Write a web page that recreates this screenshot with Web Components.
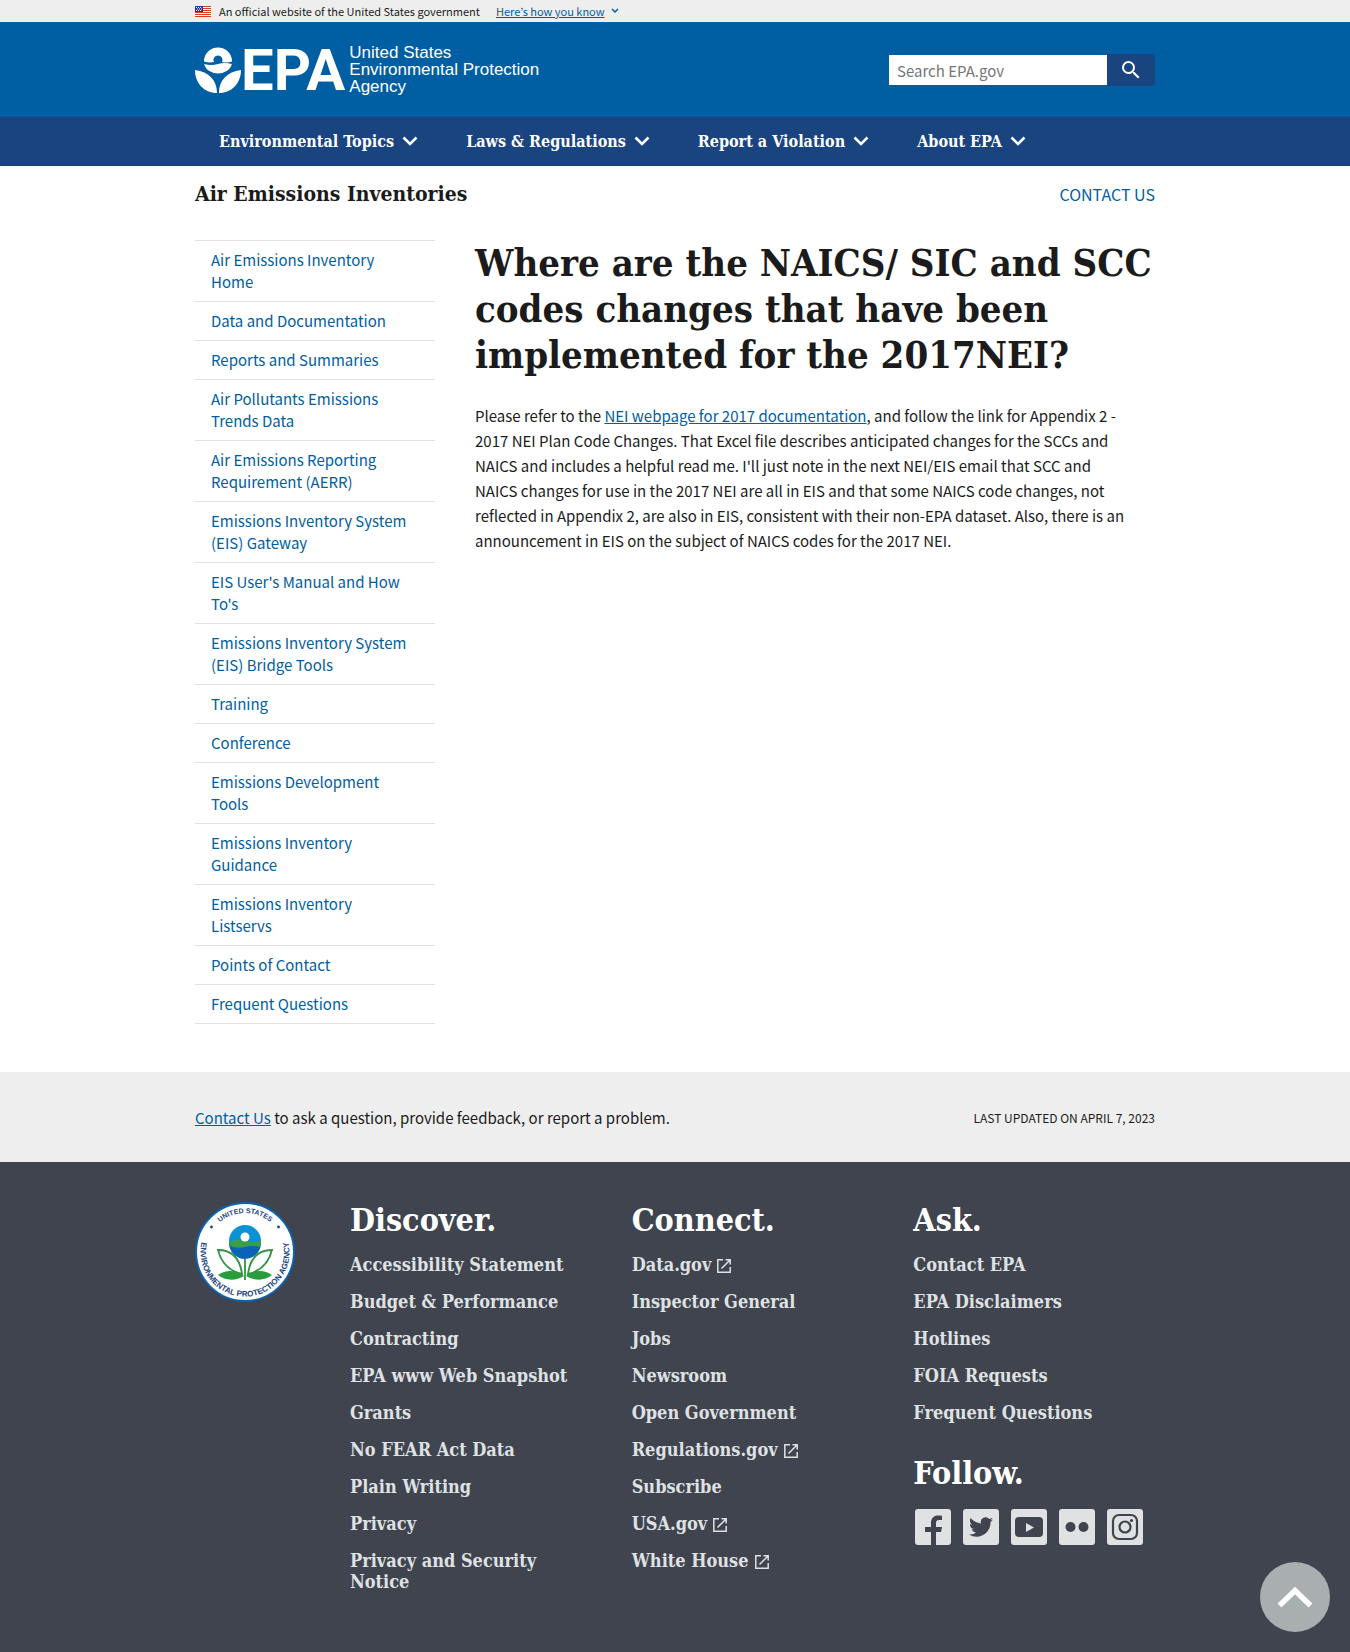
<!DOCTYPE html>
<html lang="en">
<head>
<meta charset="utf-8">
<title>Where are the NAICS/ SIC and SCC codes changes | US EPA</title>
<style>
  :root {
    --sans: "Noto Sans CJK KR", "Noto Sans", sans-serif;
    --serif: "DejaVu Serif Condensed", "DejaVu Serif", serif;
    --primary: #005ea2;
    --primary-dark: #1a4480;
    --ink: #1b1b1b;
    --line: #dfe1e2;
    --footer: #3f444f;
  }
  body { margin: 0; font: 15px/25px var(--sans); color: var(--ink); background: #fff; }
</style>
</head>
<body>
<epa-page></epa-page>
<script>
const base = `
  *, *::before, *::after { box-sizing: border-box; }
  :host { display: block; }
  a { color: var(--primary); }
  ul { list-style: none; margin: 0; padding: 0; }
  h1, h2, p { margin: 0; }
  h1, h2 { font-family: var(--serif); font-weight: 700; }
  svg { display: block; flex: none; }
  button { font: inherit; border: 0; padding: 0; margin: 0; cursor: pointer; background: none; }
  .wrap { max-width: 1024px; margin: 0 auto; padding: 0 32px; }
`;
function define(name, css, html) {
  customElements.define(name, class extends HTMLElement {
    constructor() {
      super();
      this.attachShadow({ mode: 'open' }).innerHTML = `<style>${base}${css}</style>${html}`;
    }
  });
}

define('gov-banner', `
  :host { background: #eee; font-size: 11px; line-height: 22px; }
  .wrap { display: flex; align-items: center; }
  .flag { margin-right: 8px; }
  button { display: flex; align-items: center; gap: 6px; margin-left: 16px; color: var(--primary); }
  button span { text-decoration: underline; }
`, `
  <div class="wrap">
    <svg class="flag" width="16" height="11" viewBox="0 0 16 11" aria-hidden="true">
      <path fill="#fff" d="M0 0h16v11H0z"/>
      <path fill="#db3e1f" d="M0 0h16v1H0zM0 2h16v1H0zM0 4h16v1H0zM0 6h16v1H0zM0 8h16v1H0zM0 10h16v1H0z"/>
      <path fill="#1e33b1" d="M0 0h8v6H0z"/>
      <path fill="#fff" d="M1 1h1v1H1zM3 1h1v1H3zM5 1h1v1H5zM2 2.500h1v1H2zM4 2.500h1v1H4zM6 2.500h1v1H6zM1 4h1v1H1zM3 4h1v1H3zM5 4h1v1H5z"/>
    </svg>
    <span>An official website of the United States government</span>
    <button type="button"><span>Here’s how you know</span>
      <svg width="8" height="6" viewBox="0 0 8 6" aria-hidden="true"><path d="M1 1l3 3 3-3" fill="none" stroke="#005ea2" stroke-width="1.500"/></svg>
    </button>
  </div>
`);

define('epa-logo', `
  a { display: flex; align-items: center; gap: 4px; color: #fff; text-decoration: none; }
  .mark { display: flex; align-items: center; }
  b { font: 700 58px/48px Roboto, sans-serif; }
  .name { font: 17px/17px "Liberation Sans", sans-serif; }
`, `
  <a href="#" aria-label="EPA home">
    <span class="mark">
      <svg width="46" height="46" viewBox="0 0 46 46" aria-hidden="true">
        <path fill="#fff" d="M9 14.500a14 14 0 0 1 28 0q-5 1.800-10 .5a4.500 4.500 0 1 0-8 0q-5 1-10-.5z"/>
        <path fill="#fff" d="M9.200 17q7 2 13.800 0t13.800 0a14 11.500 0 0 1-27.600 0z"/>
        <path fill="#fff" d="M0 23c14 2 22 10 22 23C9 46 0 36 0 23zM46 23c-14 2-22 10-22 23 13 0 22-10 22-23z"/>
      </svg>
      <b>EPA</b>
    </span>
    <span class="name">United States<br>Environmental Protection<br>Agency</span>
  </a>
`);

define('site-search', `
  form { display: flex; align-items: center; }
  input { width: 218px; height: 30px; border: 0; border-radius: 0; background: #fff; padding: 0 8px; font: 15px/24px var(--sans); color: var(--ink); margin: 0; }
  input::placeholder { color: #757575; opacity: 1; }
  button { width: 48px; height: 32px; background: var(--primary-dark); border-radius: 0 4px 4px 0; display: flex; align-items: center; justify-content: center; }
`, `
  <form role="search">
    <input type="search" aria-label="Search" placeholder="Search EPA.gov">
    <button type="button" aria-label="Search">
      <svg width="24" height="24" viewBox="0 0 24 24" fill="#fff" aria-hidden="true"><path d="M15.500 14h-.79l-.28-.27A6.470 6.470 0 0 0 16 9.500 6.500 6.500 0 1 0 9.500 16c1.610 0 3.090-.59 4.230-1.570l.27.28v.79l5 4.990L20.490 19l-4.990-5zm-6 0C7.010 14 5 11.990 5 9.500S7.010 5 9.500 5 14 7.010 14 9.500 11.990 14 9.500 14z"/></svg>
    </button>
  </form>
`);

define('nav-item', `
  button { display: flex; align-items: center; gap: 8px; height: 49px; padding: 0 24px; color: #fff; font: 700 16px/20px var(--serif); white-space: nowrap; }
`, `
  <button type="button"><slot></slot>
    <svg width="16" height="11" viewBox="0 0 16 11" aria-hidden="true"><path d="M1.500 1.500L8 8l6.500-6.500" fill="none" stroke="#fff" stroke-width="2.600"/></svg>
  </button>
`);

define('site-header', `
  :host { background: var(--primary); }
  .top { display: flex; justify-content: space-between; align-items: flex-start; height: 95px; padding-top: 22px; }
  site-search { padding-top: 10px; }
  nav { background: var(--primary-dark); }
  nav .wrap { display: flex; }
`, `
  <div class="wrap"><div class="top"><epa-logo></epa-logo><site-search></site-search></div></div>
  <nav aria-label="Primary"><div class="wrap">
    <nav-item>Environmental Topics</nav-item><nav-item>Laws &amp; Regulations</nav-item><nav-item>Report a Violation</nav-item><nav-item>About EPA</nav-item>
  </div></nav>
`);

define('side-nav', `
  ul { border-bottom: 1px solid var(--line); }
  li { border-top: 1px solid var(--line); }
  a { display: block; padding: 8px 24px 8px 16px; line-height: 22px; text-decoration: none; }
`, `<nav aria-label="Section"><ul>${[
  'Air Emissions Inventory Home', 'Data and Documentation', 'Reports and Summaries',
  'Air Pollutants Emissions Trends Data', 'Air Emissions Reporting Requirement (AERR)',
  'Emissions Inventory System (EIS) Gateway', "EIS User's Manual and How To's",
  'Emissions Inventory System (EIS) Bridge Tools', 'Training', 'Conference',
  'Emissions Development Tools', 'Emissions Inventory Guidance', 'Emissions Inventory Listservs',
  'Points of Contact', 'Frequent Questions'
].map(t => `<li><a href="#">${t}</a></li>`).join('')}</ul></nav>`);

define('page-body', `
  .title { display: flex; justify-content: space-between; align-items: center; padding: 14px 0 32px; }
  h2 { font-size: 21px; line-height: 28px; }
  .title a { font-size: 16px; text-decoration: none; }
  .cols { display: grid; grid-template-columns: 240px minmax(0, 1fr); gap: 40px; padding-bottom: 48px; }
  h1 { font-size: 38px; line-height: 46px; margin-bottom: 25px; }
  p { padding-right: 28px; }
`, `
  <div class="wrap">
    <div class="title"><h2>Air Emissions Inventories</h2><a href="#">CONTACT US</a></div>
    <div class="cols">
      <side-nav></side-nav>
      <main>
        <h1>Where are the NAICS/ SIC and SCC codes changes that have been implemented for the 2017NEI?</h1>
        <p>Please refer to the <a href="#">NEI webpage for 2017 documentation</a>, and follow the link for Appendix 2 - 2017 NEI Plan Code Changes. That Excel file describes anticipated changes for the SCCs and NAICS and includes a helpful read me. I'll just note in the next NEI/EIS email that SCC and NAICS changes for use in the 2017 NEI are all in EIS and that some NAICS code changes, not reflected in Appendix 2, are also in EIS, consistent with their non-EPA dataset. Also, there is an announcement in EIS on the subject of NAICS codes for the 2017 NEI.</p>
      </main>
    </div>
  </div>
`);

define('contact-strip', `
  :host { background: #eee; }
  .row { display: flex; justify-content: space-between; align-items: center; height: 90px; }
  small { font-size: 12px; }
`, `
  <div class="wrap"><div class="row">
    <p><a href="#">Contact Us</a> to ask a question, provide feedback, or report a problem.</p>
    <small>LAST UPDATED ON APRIL 7, 2023</small>
  </div></div>
`);

define('epa-seal', `
  text { font-family: "Liberation Sans", sans-serif; font-weight: 700; fill: #1a4480; text-anchor: middle; }
  .top { font-size: 7px; }
  .ring { font-size: 8px; }
`, `
  <svg width="100" height="100" viewBox="0 0 100 100" role="img" aria-label="EPA seal">
    <defs>
      <path id="up" d="M11 50a39 39 0 0 1 78 0"/>
      <path id="down" d="M12 27A44.500 44.500 0 1 0 88 27"/>
    </defs>
    <circle cx="50" cy="50" r="49" fill="#fff" stroke="#0b63b0" stroke-width="2"/>
    <text class="top"><textPath href="#up" startOffset="50%">UNITED STATES</textPath></text>
    <text class="ring"><textPath href="#down" startOffset="50%">ENVIRONMENTAL PROTECTION AGENCY</textPath></text>
    <circle cx="16.500" cy="25" r="1.400" fill="#1a4480"/><circle cx="83.500" cy="25" r="1.400" fill="#1a4480"/>
    <circle cx="50" cy="39" r="16" fill="#0b92d6"/>
    <path fill="#0b63b8" d="M34 41a16 16 0 0 0 32 0z"/>
    <path fill="#3a9e4b" d="M34 40q8-4 16-1t16-1q0 4-1 7-8-2-15 0t-15-1z"/>
    <circle cx="50" cy="35" r="4.500" fill="#fff"/>
    <path fill="none" stroke="#2f9440" stroke-width="1.800" d="M50 57v21M47 72C34 69 26 60 23 48c14 0 22 9 24 24zM53 72c13-3 21-12 24-24-14 0-22 9-24 24z"/>
    <path fill="#2a9c3c" d="M23 73c8-6 19-5 26 1-8 5-19 5-26-1zM77 73c-8-6-19-5-26 1 8 5 19 5 26-1z"/>
  </svg>
`);

customElements.define('footer-column', class extends HTMLElement {
  constructor() {
    super();
    this.attachShadow({ mode: 'open' });
  }
  connectedCallback() {
    const ext = '<svg width="16" height="16" viewBox="0 0 16 16" aria-hidden="true"><path d="M7 1.800H1.800v12.400h12.400V9M9.500 1.800h4.700v4.700M14 2L5.500 10.500" fill="none" stroke="#dfe1e2" stroke-width="1.500"/></svg>';
    const items = (this.getAttribute('items') || '').split('|').filter(Boolean);
    this.shadowRoot.innerHTML = `<style>${base}
      h2 { font-size: 32px; line-height: 36px; color: #fff; margin-bottom: 16px; }
      ul { display: grid; gap: 16px; }
      a { color: #dfe1e2; text-decoration: none; font: 700 18px/21px var(--serif); }
      li { line-height: 21px; display: flex; }
      svg { display: inline-block; vertical-align: -3px; margin-left: 5px; }
    </style><h2>${this.getAttribute('heading')}</h2>${items.length ? `<ul>${items.map(t =>
      `<li><a href="#">${t.replace('^', '').replace('&', '&amp;')}${t.endsWith('^') ? ext : ''}</a></li>`).join('')}</ul>` : ''}<slot></slot>`;
  }
});

define('social-links', `
  ul { display: flex; gap: 8px; }
  a { display: block; }
`, `<ul>${[
  ['Facebook', '<path fill="#3f444f" d="M18 39V25h-6v-5h6v-4c0-5 3-7.500 7-7.500 2 0 3 0 4 .3V13h-3c-2 0-3 1-3 3v4h6l-1 5h-5v14z"/>'],
  ['Twitter', '<path fill="#3f444f" transform="translate(8 8)" d="M24 4.600a10 10 0 0 1-2.800.8 5 5 0 0 0 2.200-2.700 10 10 0 0 1-3.100 1.200 4.900 4.900 0 0 0-8.400 4.500A14 14 0 0 1 1.700 3.100a4.900 4.900 0 0 0 1.500 6.600 5 5 0 0 1-2.200-.6 4.900 4.900 0 0 0 3.900 4.900 5 5 0 0 1-2.200.1 4.900 4.900 0 0 0 4.600 3.400A9.900 9.900 0 0 1 0 19.500a14 14 0 0 0 7.500 2.200c9.100 0 14.300-7.700 14-14.600a10 10 0 0 0 2.500-2.500z"/>'],
  ['YouTube', '<rect x="6" y="10" width="28" height="20" rx="4" fill="#3f444f"/><path fill="#dfe1e2" d="M17 16v9l8-4.500z"/>'],
  ['Flickr', '<circle cx="13.500" cy="20" r="5" fill="#3f444f"/><circle cx="26.500" cy="20" r="5" fill="#3f444f"/>'],
  ['Instagram', '<g fill="none" stroke="#3f444f" stroke-width="2.200"><rect x="8" y="8" width="24" height="24" rx="6"/><circle cx="20" cy="20" r="5.500"/></g><circle cx="26.500" cy="13.500" r="1.600" fill="#3f444f"/>']
].map(([n, p]) => `<li><a href="#" aria-label="${n}"><svg width="40" height="40" viewBox="0 0 40 40"><rect x="2" y="2" width="36" height="36" rx="3" fill="#dfe1e2"/>${p}</svg></a></li>`).join('')}</ul>`);

define('site-footer', `
  :host { background: var(--footer); color: #dfe1e2; }
  .wrap { display: grid; grid-template-columns: 100px minmax(0, 1fr); gap: 55px; padding-top: 40px; padding-bottom: 60px; }
  .cols { display: grid; grid-template-columns: repeat(3, minmax(0, 1fr)); gap: 40px; }
  .stack { display: grid; gap: 32px; align-content: start; }
`, `
  <div class="wrap">
    <epa-seal></epa-seal>
    <div class="cols">
      <footer-column heading="Discover." items="Accessibility Statement|Budget &amp; Performance|Contracting|EPA www Web Snapshot|Grants|No FEAR Act Data|Plain Writing|Privacy|Privacy and Security Notice"></footer-column>
      <footer-column heading="Connect." items="Data.gov^|Inspector General|Jobs|Newsroom|Open Government|Regulations.gov^|Subscribe|USA.gov^|White House^"></footer-column>
      <div class="stack">
        <footer-column heading="Ask." items="Contact EPA|EPA Disclaimers|Hotlines|FOIA Requests|Frequent Questions"></footer-column>
        <footer-column heading="Follow."><social-links></social-links></footer-column>
      </div>
    </div>
  </div>
`);

define('back-to-top', `
  :host { position: fixed; right: 20px; bottom: 20px; }
  button { width: 70px; height: 70px; border-radius: 50%; background: #a9aeb1; display: flex; align-items: center; justify-content: center; }
`, `
  <button type="button" aria-label="Back to top">
    <svg width="36" height="24" viewBox="0 0 36 24" aria-hidden="true"><path d="M2.500 20.500L18 5.500l15.500 15" fill="none" stroke="#fff" stroke-width="5.500"/></svg>
  </button>
`);

define('epa-page', '', `
  <gov-banner></gov-banner>
  <site-header></site-header>
  <page-body></page-body>
  <contact-strip></contact-strip>
  <site-footer></site-footer>
  <back-to-top></back-to-top>
`);
</script>
</body>
</html>
